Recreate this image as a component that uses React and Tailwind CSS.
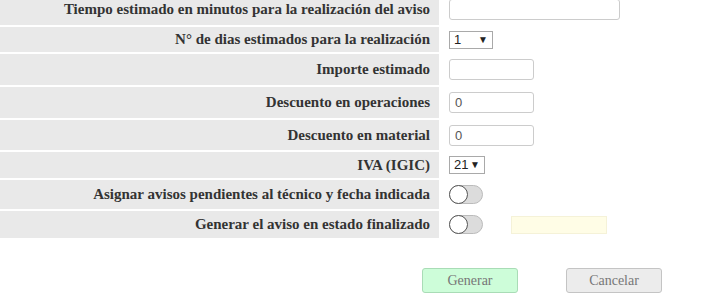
import React, { useState } from "react";

const serif = { fontFamily: '"Liberation Serif", "Times New Roman", serif' };
const sans = { fontFamily: '"Liberation Sans", Arial, sans-serif' };

function Row({ label, h, children }) {
  return (
    <div className={`flex ${h}`}>
      <div
        style={serif}
        className="w-[439px] shrink-0 bg-[#e9e9e9] flex items-center justify-end pr-[9px] text-[15px] font-bold text-[#333]"
      >
        {label}
      </div>
      <div className="flex items-center pl-[10px] gap-[28px]">{children}</div>
    </div>
  );
}

function TextBox({ w, value }) {
  return (
    <input
      defaultValue={value}
      style={sans}
      className={`${w} h-[21px] border border-[#ccc] rounded-[3px] px-[5px] text-[13px] text-[#555] bg-white outline-none`}
    />
  );
}

function FakeSelect({ w, value }) {
  return (
    <div
      style={sans}
      className={`${w} h-[18px] border border-[#a9a9a9] flex items-center justify-between pl-[4px] pr-[4px] text-[13px] text-[#222] bg-white`}
    >
      <span>{value}</span>
      <span className="text-[10px] leading-none">▼</span>
    </div>
  );
}

function Toggle() {
  const [on, setOn] = useState(false);
  return (
    <button
      onClick={() => setOn(!on)}
      className={`w-[34px] h-[19px] rounded-full border border-[#bbb] flex items-center ${
        on ? "bg-[#8fd19e] justify-end" : "bg-[#dcdcdc] justify-start"
      }`}
    >
      <span className="w-[19px] h-[19px] -m-px rounded-full bg-white border border-[#555]" />
    </button>
  );
}

export default function App() {
  return (
    <div style={serif} className="w-[717px] h-[303px] overflow-hidden bg-white">
      <div className="flex flex-col gap-[2px] -mt-[7px]">
        <Row label="Tiempo estimado en minutos para la realización del aviso" h="h-[32px]">
          <TextBox w="w-[171px]" />
        </Row>
        <Row label="N° de dias estimados para la realización" h="h-[25px]">
          <FakeSelect w="w-[44px]" value="1" />
        </Row>
        <Row label="Importe estimado" h="h-[31px]">
          <TextBox w="w-[85px]" />
        </Row>
        <Row label="Descuento en operaciones" h="h-[31px]">
          <TextBox w="w-[85px]" value="0" />
        </Row>
        <Row label="Descuento en material" h="h-[30px]">
          <TextBox w="w-[85px]" value="0" />
        </Row>
        <Row label="IVA (IGIC)" h="h-[26px]">
          <FakeSelect w="w-[36px]" value="21" />
        </Row>
        <Row label="Asignar avisos pendientes al técnico y fecha indicada" h="h-[29px]">
          <Toggle />
        </Row>
        <Row label="Generar el aviso en estado finalizado" h="h-[27px]">
          <Toggle />
          <div className="w-[96px] h-[18px] bg-[#fffde6] border border-[#f5f2d8]" />
        </Row>
      </div>
      <div className="flex pl-[422px] gap-[48px] mt-[30px]">
        <button
          style={serif}
          className="w-[96px] h-[25px] rounded-[3px] bg-[#cdfdd9] border border-[#a9dcb6] text-[14px] text-[#777]"
        >
          Generar
        </button>
        <button
          style={serif}
          className="w-[96px] h-[25px] rounded-[3px] bg-[#ececec] border border-[#c4c4c4] text-[14px] text-[#777]"
        >
          Cancelar
        </button>
      </div>
    </div>
  );
}
